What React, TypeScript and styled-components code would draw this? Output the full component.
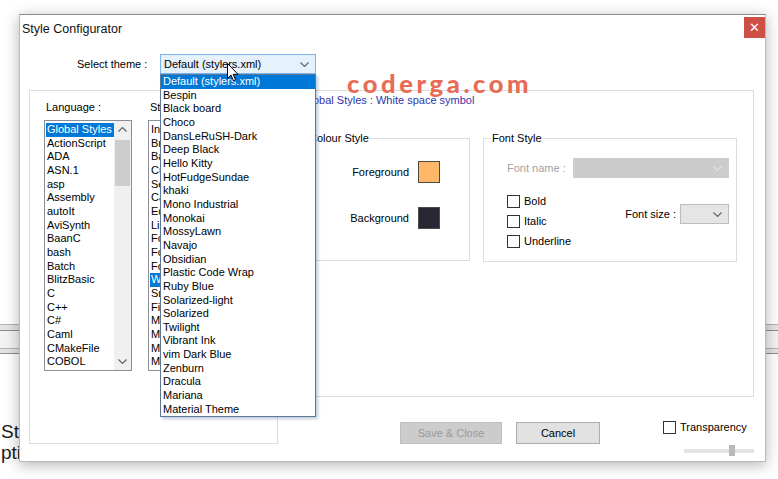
import React from "react";
import styled, { createGlobalStyle } from "styled-components";

const Global = createGlobalStyle`
  html, body { margin: 0; padding: 0; background: #fff; }
  body { font-family: "Liberation Sans", Arial, sans-serif; font-size: 11px; color: #000; }
  #root { width: 778px; height: 479px; }
`;

const Desktop = styled.div`
  position: relative;
  width: 778px;
  height: 479px;
  overflow: hidden;
  background: #fff;
`;

/* ---------- background application ---------- */
const BackPage = styled.div`
  display: flex;
  flex-direction: column;
  padding-top: 324px;
`;
const Rule = styled.div<{ $h: number }>`
  height: ${(p) => p.$h}px;
  background: #e4e4e4;
  border-top: 1px solid #b4b4b4;
  border-bottom: 1px solid #8e8e8e;
`;
const Band = styled.div`
  height: 17px;
  background: #f3f3f3;
`;
const BackText = styled.div`
  margin-top: 67px;
  font-family: "Liberation Sans", Arial, sans-serif;
  font-size: 19px;
  line-height: 21px;
  color: #1a1a1a;
  padding-left: 1px;
`;

/* ---------- dialog window ---------- */
const Dialog = styled.div`
  position: absolute;
  left: 19px;
  top: 14px;
  width: 747px;
  height: 448px;
  box-sizing: border-box;
  background: #fff;
  border: 1px solid #b9b9b9;
  border-top-color: #8c8c8c;
  box-shadow: 0 3px 14px rgba(0, 0, 0, 0.3);
  display: flex;
  flex-direction: column;
`;
const TitleBar = styled.div`
  height: 29px;
  display: flex;
  justify-content: space-between;
  align-items: flex-start;
`;
const Title = styled.div`
  padding-left: 2px;
  font-size: 12.5px;
  line-height: 28px;
  color: #111;
`;
const CloseBtn = styled.div`
  margin-top: 2px;
  width: 21px;
  height: 21px;
  background: #cd5046;
  color: #fff;
  display: flex;
  align-items: center;
  justify-content: center;
  font-size: 13px;
  line-height: 1;
`;

const ThemeRow = styled.div`
  margin-top: 10px;
  height: 20px;
  display: flex;
  align-items: center;
  padding-left: 57px;
`;
const ThemeLabel = styled.div`
  width: 83px;
  line-height: 14px;
`;
const Combo = styled.div`
  position: relative;
  width: 156px;
  height: 20px;
  box-sizing: border-box;
  border: 1px solid #7eb4ea;
  background: #e5f1fb;
  display: flex;
  align-items: center;
  justify-content: space-between;
  padding: 0 6px 0 3px;
  line-height: 14px;
`;
const Chevron = styled.svg<{ $c?: string }>`
  width: 9px;
  height: 5px;
  flex: none;
  polyline {
    fill: none;
    stroke: ${(p) => p.$c || "#606060"};
    stroke-width: 1.1;
  }
`;
const DropList = styled.div`
  position: absolute;
  left: -1px;
  top: 19px;
  width: 156px;
  box-sizing: border-box;
  border: 1px solid #5f7896;
  background: #fff;
  box-shadow: 2px 2px 3px rgba(70, 110, 160, 0.35);
  z-index: 5;
`;
const DropItem = styled.div<{ $sel?: boolean }>`
  height: 13.67px;
  line-height: 13.67px;
  padding-left: 2px;
  white-space: nowrap;
  background: ${(p) => (p.$sel ? "#0078d7" : "transparent")};
  color: ${(p) => (p.$sel ? "#fff" : "#000")};
`;
const Cursor = styled.svg`
  position: absolute;
  left: 66px;
  top: 8px;
  width: 12px;
  height: 19px;
  z-index: 6;
`;

const Body = styled.div`
  margin-top: 16px;
  display: flex;
  padding-left: 9px;
`;
const LeftGroup = styled.div`
  width: 249px;
  height: 354px;
  box-sizing: border-box;
  border: 1px solid #dcdcdc;
  padding: 9px 0 0 14px;
  display: flex;
  gap: 16px;
`;
const Column = styled.div`
  display: flex;
  flex-direction: column;
`;
const ColLabel = styled.div`
  line-height: 14px;
  margin-bottom: 6px;
  padding-left: 2px;
`;
const ListBox = styled.div<{ $w: number }>`
  width: ${(p) => p.$w}px;
  height: 251px;
  box-sizing: border-box;
  border: 1px solid #8a8f98;
  background: #fff;
  display: flex;
  overflow: hidden;
`;
const ListItems = styled.div`
  flex: 1;
  min-width: 0;
  padding: 2px 0 0 1px;
  overflow: hidden;
`;
const ListItem = styled.div<{ $sel?: boolean }>`
  height: 13.67px;
  line-height: 13.67px;
  padding-left: 1px;
  white-space: nowrap;
  background: ${(p) => (p.$sel ? "#0078d7" : "transparent")};
  color: ${(p) => (p.$sel ? "#fff" : "#000")};
`;
const ScrollBar = styled.div`
  width: 17px;
  flex: none;
  background: #f0f0f0;
  display: flex;
  flex-direction: column;
  align-items: center;
`;
const ScrollArrow = styled.div`
  width: 17px;
  height: 17px;
  display: flex;
  align-items: center;
  justify-content: center;
`;
const Thumb = styled.div`
  margin-top: 2px;
  width: 15px;
  height: 46px;
  background: #cdcdcd;
`;
const Spacer = styled.div`
  flex: 1;
`;

const RightCol = styled.div`
  margin-left: 10px;
  width: 466px;
  display: flex;
  flex-direction: column;
`;
const RightGroup = styled.div`
  width: 466px;
  height: 307px;
  box-sizing: border-box;
  border: 1px solid #dcdcdc;
  padding-top: 2px;
`;
const StyleHeader = styled.div`
  margin-left: 13px;
  line-height: 14px;
  color: #3434a8;
`;
const GroupsRow = styled.div`
  margin: 24px 0 0 11px;
  display: flex;
  gap: 13px;
`;
const Group = styled.fieldset<{ $w: number; $h: number }>`
  box-sizing: border-box;
  width: ${(p) => p.$w}px;
  height: ${(p) => p.$h}px;
  margin: 0;
  padding: 0;
  min-width: 0;
  border: 1px solid #dcdcdc;
`;
const Legend = styled.legend`
  margin-left: 7px;
  padding: 0 1px;
  line-height: 14px;
  font-size: 11px;
`;
const ColourGrid = styled.div`
  padding-top: 16px;
  display: grid;
  grid-template-columns: 108px 22px;
  column-gap: 9px;
  row-gap: 24px;
  align-items: center;
`;
const RightLabel = styled.div`
  text-align: right;
  line-height: 14px;
`;
const Swatch = styled.div<{ $c: string }>`
  width: 22px;
  height: 22px;
  box-sizing: border-box;
  border: 1px solid #4a4a4a;
  background: ${(p) => p.$c};
`;
const FontBody = styled.div`
  padding: 13px 7px 0 23px;
  display: flex;
  flex-direction: column;
`;
const FontNameRow = styled.div`
  display: flex;
  align-items: center;
`;
const DimLabel = styled.div`
  width: 66px;
  color: #a3a3a3;
  line-height: 14px;
`;
const FlatCombo = styled.div<{ $w?: number; $disabled?: boolean }>`
  ${(p) => (p.$w ? `width: ${p.$w}px;` : "flex: 1;")}
  height: 20px;
  box-sizing: border-box;
  background: ${(p) => (p.$disabled ? "#cccccc" : "#e5e5e5")};
  border: 1px solid ${(p) => (p.$disabled ? "#cccccc" : "#bdbdbd")};
  display: flex;
  align-items: center;
  justify-content: flex-end;
  padding-right: 6px;
`;
const OptionsRow = styled.div`
  margin-top: 17px;
  display: flex;
  justify-content: space-between;
  align-items: flex-start;
`;
const Checks = styled.div`
  display: flex;
  flex-direction: column;
  gap: 7px;
`;
const CheckRow = styled.div`
  display: flex;
  align-items: center;
  gap: 4px;
  height: 13px;
  line-height: 13px;
  white-space: nowrap;
`;
const Box = styled.div`
  width: 13px;
  height: 13px;
  box-sizing: border-box;
  border: 1px solid #333;
  background: #fff;
  flex: none;
`;
const FontSize = styled.div`
  margin-top: 9px;
  display: flex;
  align-items: center;
  gap: 4px;
  line-height: 14px;
`;

const Footer = styled.div`
  margin-top: 25px;
  padding-left: 112px;
  display: flex;
  align-items: flex-start;
  gap: 14px;
`;
const Button = styled.div<{ $w: number; $disabled?: boolean }>`
  width: ${(p) => p.$w}px;
  height: 22px;
  box-sizing: border-box;
  background: ${(p) => (p.$disabled ? "#cccccc" : "#e1e1e1")};
  border: 1px solid ${(p) => (p.$disabled ? "#bfbfbf" : "#adadad")};
  color: ${(p) => (p.$disabled ? "#9a9a9a" : "#000")};
  display: flex;
  align-items: center;
  justify-content: center;
`;
const TransBlock = styled.div`
  margin-left: auto;
  margin-top: -1px;
  width: 91px;
  display: flex;
  flex-direction: column;
`;
const Slider = styled.div`
  position: relative;
  align-self: flex-end;
  margin-top: 11px;
  width: 70px;
  height: 11px;
  display: flex;
  align-items: center;
`;
const Track = styled.div`
  width: 100%;
  height: 4px;
  background: #e3e3e3;
`;
const SliderThumb = styled.div`
  position: absolute;
  left: 45px;
  top: 0;
  width: 6px;
  height: 11px;
  background: #b9b9b9;
`;

const Watermark = styled.div`
  position: absolute;
  left: 347px;
  top: 71px;
  font-family: Lato, "Open Sans", sans-serif;
  font-weight: 900;
  font-size: 25.5px;
  line-height: 25px;
  letter-spacing: 3.6px;
  color: #e76b55;
  z-index: 20;
`;

const themes = [
  "Default (stylers.xml)",
  "Bespin",
  "Black board",
  "Choco",
  "DansLeRuSH-Dark",
  "Deep Black",
  "Hello Kitty",
  "HotFudgeSundae",
  "khaki",
  "Mono Industrial",
  "Monokai",
  "MossyLawn",
  "Navajo",
  "Obsidian",
  "Plastic Code Wrap",
  "Ruby Blue",
  "Solarized-light",
  "Solarized",
  "Twilight",
  "Vibrant Ink",
  "vim Dark Blue",
  "Zenburn",
  "Dracula",
  "Mariana",
  "Material Theme",
];

const languages = [
  "Global Styles",
  "ActionScript",
  "ADA",
  "ASN.1",
  "asp",
  "Assembly",
  "autoIt",
  "AviSynth",
  "BaanC",
  "bash",
  "Batch",
  "BlitzBasic",
  "C",
  "C++",
  "C#",
  "Caml",
  "CMakeFile",
  "COBOL",
];

const styleNames = [
  "Indent guideline style",
  "Brace highlight style",
  "Bad brace colour",
  "Current line background colour",
  "Selected text colour",
  "Caret colour",
  "Edge colour",
  "Line number margin",
  "Fold",
  "Fold active",
  "Fold margin",
  "White space symbol",
  "Smart HighLighting",
  "Find Mark Style",
  "Mark Style 1",
  "Mark Style 2",
  "Mark Style 3",
  "Mark Style 4",
];

const Down = ({ c }: { c?: string }) => (
  <Chevron viewBox="0 0 9 5" $c={c}>
    <polyline points="0.5,0.5 4.5,4.5 8.5,0.5" />
  </Chevron>
);
const Up = () => (
  <Chevron viewBox="0 0 9 5">
    <polyline points="0.5,4.5 4.5,0.5 8.5,4.5" />
  </Chevron>
);

const Check = ({ label }: { label: string }) => (
  <CheckRow>
    <Box />
    {label}
  </CheckRow>
);

export default function App() {
  return (
    <Desktop>
      <Global />
      <BackPage>
        <Rule $h={5} />
        <Band />
        <Rule $h={4} />
        <BackText>
          St
          <br />
          pti
        </BackText>
      </BackPage>

      <Dialog>
        <TitleBar>
          <Title>Style Configurator</Title>
          <CloseBtn>✕</CloseBtn>
        </TitleBar>

        <ThemeRow>
          <ThemeLabel>Select theme :</ThemeLabel>
          <Combo>
            <span>Default (stylers.xml)</span>
            <Down />
            <Cursor viewBox="0 0 12 19">
              <path
                d="M0.5 0.5 L0.5 15.5 L4 12 L6.5 17.8 L8.6 16.9 L6.2 11.3 L11 11.3 Z"
                fill="#fff"
                stroke="#000"
                strokeWidth="1"
                strokeLinejoin="round"
              />
            </Cursor>
            <DropList>
              {themes.map((t, i) => (
                <DropItem key={t} $sel={i === 0}>
                  {t}
                </DropItem>
              ))}
            </DropList>
          </Combo>
        </ThemeRow>

        <Body>
          <LeftGroup>
            <Column>
              <ColLabel>Language :</ColLabel>
              <ListBox $w={88}>
                <ListItems>
                  {languages.map((l, i) => (
                    <ListItem key={l} $sel={i === 0}>
                      {l}
                    </ListItem>
                  ))}
                </ListItems>
                <ScrollBar>
                  <ScrollArrow>
                    <Up />
                  </ScrollArrow>
                  <Thumb />
                  <Spacer />
                  <ScrollArrow>
                    <Down />
                  </ScrollArrow>
                </ScrollBar>
              </ListBox>
            </Column>
            <Column>
              <ColLabel>Style :</ColLabel>
              <ListBox $w={117}>
                <ListItems>
                  {styleNames.map((s, i) => (
                    <ListItem key={s} $sel={i === 11}>
                      {s}
                    </ListItem>
                  ))}
                </ListItems>
              </ListBox>
            </Column>
          </LeftGroup>

          <RightCol>
            <RightGroup>
              <StyleHeader>Global Styles : White space symbol</StyleHeader>
              <GroupsRow>
                <Group $w={170} $h={130}>
                  <Legend>Colour Style</Legend>
                  <ColourGrid>
                    <RightLabel>Foreground</RightLabel>
                    <Swatch $c="#ffb867" />
                    <RightLabel>Background</RightLabel>
                    <Swatch $c="#272833" />
                  </ColourGrid>
                </Group>
                <Group $w={254} $h={131}>
                  <Legend>Font Style</Legend>
                  <FontBody>
                    <FontNameRow>
                      <DimLabel>Font name :</DimLabel>
                      <FlatCombo $disabled>
                        <Down c="#e2e2e2" />
                      </FlatCombo>
                    </FontNameRow>
                    <OptionsRow>
                      <Checks>
                        <Check label="Bold" />
                        <Check label="Italic" />
                        <Check label="Underline" />
                      </Checks>
                      <FontSize>
                        Font size :
                        <FlatCombo $w={49}>
                          <Down />
                        </FlatCombo>
                      </FontSize>
                    </OptionsRow>
                  </FontBody>
                </Group>
              </GroupsRow>
            </RightGroup>

            <Footer>
              <Button $w={102} $disabled>
                Save &amp; Close
              </Button>
              <Button $w={84}>Cancel</Button>
              <TransBlock>
                <Check label="Transparency" />
                <Slider>
                  <Track />
                  <SliderThumb />
                </Slider>
              </TransBlock>
            </Footer>
          </RightCol>
        </Body>
      </Dialog>

      <Watermark>coderga.com</Watermark>
    </Desktop>
  );
}
